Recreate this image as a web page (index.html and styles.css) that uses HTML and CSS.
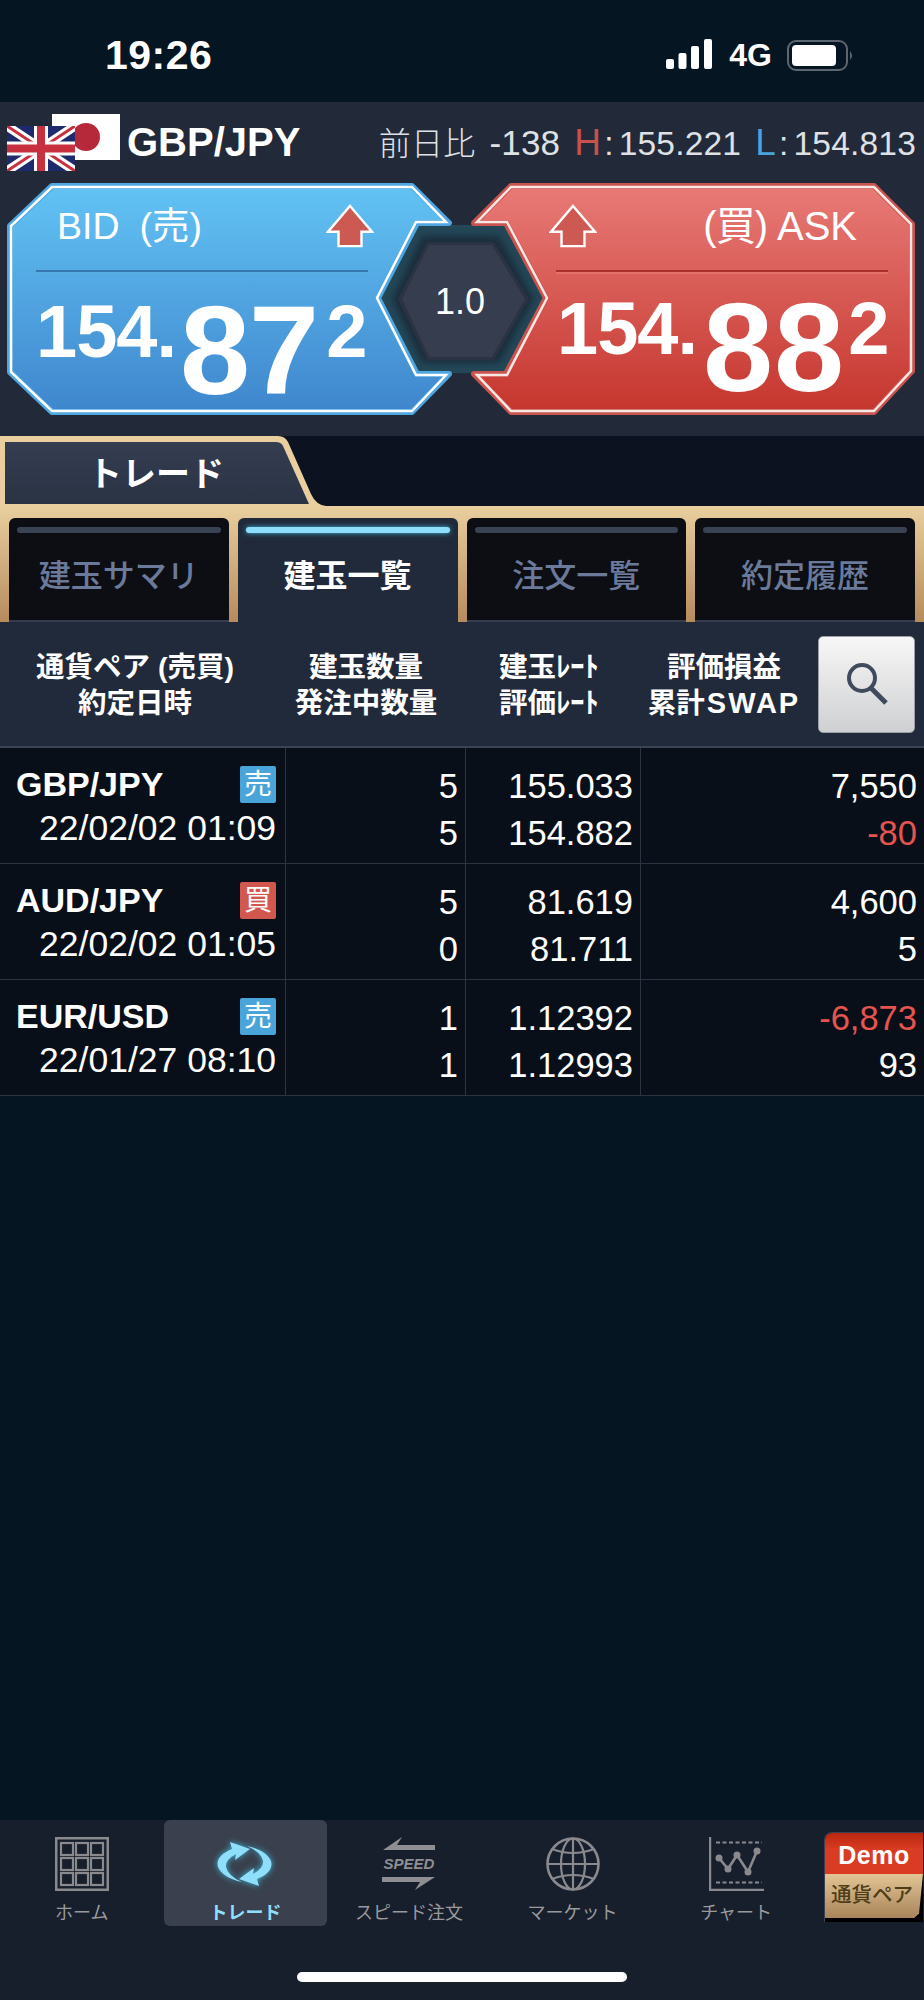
FILE: index.html
```html
<!DOCTYPE html>
<html lang="ja">
    <head>
        <meta charset="UTF-8" />
        <meta name="viewport" content="width=device-width, initial-scale=1.0" />
        <title>トレード</title>
        <link rel="stylesheet" href="styles.css">
    </head>
    <body>
        <div class="screen">
            <div class="status">
                <span class="time">19:26</span>
                <div class="status-right">
                    <svg class="signal" viewBox="0 0 46 30" width="46" height="30">
                        <rect x="0" y="20" width="8" height="10" rx="2" />
                        <rect x="12.5" y="14" width="8" height="16" rx="2" />
                        <rect x="25" y="7" width="8" height="23" rx="2" />
                        <rect x="38" y="0" width="8" height="30" rx="2" />
                    </svg>
                    <span class="net">4G</span>
                    <svg class="battery" viewBox="0 0 67 31" width="67" height="31">
                        <rect x="1" y="1" width="59" height="29" rx="8" fill="none" stroke="#5c6670" stroke-width="2" />
                        <rect x="5" y="5" width="44" height="21" rx="4" fill="#fff" />
                        <path d="M63 11 Q67 15.5 63 20 Z" fill="#5c6670" />
                    </svg>
                </div>
            </div>

            <div class="pair-bar">
                <div class="flags">
                    <svg class="flag-uk" viewBox="0 0 68 45" width="68" height="45">
                        <rect width="68" height="45" fill="#1d2a6b" />
                        <path d="M0 0 L68 45 M68 0 L0 45" stroke="#fff" stroke-width="9" />
                        <path d="M0 0 L68 45 M68 0 L0 45" stroke="#c8303f" stroke-width="3" />
                        <path d="M34 0 V45 M0 22.5 H68" stroke="#fff" stroke-width="14" />
                        <path d="M34 0 V45 M0 22.5 H68" stroke="#c8303f" stroke-width="8" />
                    </svg>
                    <svg class="flag-jp" viewBox="0 0 68 46" width="68" height="46">
                        <rect width="68" height="46" fill="#fff" />
                        <circle cx="34" cy="23" r="14" fill="#b5293b" />
                    </svg>
                </div>
                <span class="pair-name">GBP/JPY</span>
                <div class="pair-info">
                    <span class="info-label">前日比</span>
                    <span class="info-change">-138</span>
                    <span class="info-stat"><span class="stat-key high">H</span><span class="stat-colon">:</span>155.221</span>
                    <span class="info-stat"><span class="stat-key low">L</span><span class="stat-colon">:</span>154.813</span>
                </div>
            </div>

            <div class="quotes">
                <div class="quote quote-bid">
                    <svg class="quote-bg" viewBox="0 0 448 232" width="448" height="232">
                        <defs>
                            <linearGradient id="bidFill" x1="0" y1="0" x2="0" y2="1">
                                <stop offset="0" stop-color="#62c3f4" />
                                <stop offset="1" stop-color="#3f86cd" />
                            </linearGradient>
                        </defs>
                        <path d="M45 3 H405 L442 40 H410 L371 115 L410 191 H442 L405 229 H45 L3 189 V43 Z" fill="url(#bidFill)" stroke="#4fa6e0" stroke-width="6" stroke-linejoin="round" />
                        <path d="M45 4 H405 L439 39 H409 L370 115 L409 192 H439 L405 228 H45 L4 189 V43 Z" fill="none" stroke="#fff" stroke-width="2.5" />
                    </svg>
                    <div class="quote-head">
                        <span class="quote-label">BID<span class="label-gap"></span>(売)</span>
                        <svg class="arrow" viewBox="0 0 50 46" width="48" height="44">
                            <path d="M25 2 L48 29 H37 V44 H13 V29 H2 Z" fill="#cd5a52" stroke="#fff" stroke-width="2.5" />
                        </svg>
                    </div>
                    <div class="quote-rule"></div>
                    <div class="price">
                        <span class="price-small">154.</span><span class="price-big">87</span><span class="price-small">2</span>
                    </div>
                </div>

                <div class="quote quote-ask">
                    <svg class="quote-bg" viewBox="0 0 445 232" width="445" height="232">
                        <defs>
                            <linearGradient id="askFill" x1="0" y1="0" x2="0" y2="1">
                                <stop offset="0" stop-color="#e87a76" />
                                <stop offset="1" stop-color="#c5362e" />
                            </linearGradient>
                        </defs>
                        <path d="M41 3 H404 L442 41 V188 L404 229 H41 L4 191 H36 L76 115 L36 40 H4 Z" fill="url(#askFill)" stroke="#c9544f" stroke-width="6" stroke-linejoin="round" />
                        <path d="M41 4 H404 L441 41 V188 L404 228 H41 L7 192 H37 L77 115 L37 39 H7 Z" fill="none" stroke="#fbe6e4" stroke-width="2.5" />
                    </svg>
                    <div class="quote-head">
                        <svg class="arrow" viewBox="0 0 50 46" width="48" height="44">
                            <path d="M25 2 L48 29 H37 V44 H13 V29 H2 Z" fill="#cd5a52" stroke="#fff" stroke-width="2.5" />
                        </svg>
                        <span class="quote-label"><span class="paren-tight">(買)</span>ASK</span>
                    </div>
                    <div class="quote-rule"></div>
                    <div class="price">
                        <span class="price-small">154.</span><span class="price-big">88</span><span class="price-small">2</span>
                    </div>
                </div>

                <div class="spread">
                    <svg viewBox="0 0 170 148" width="170" height="148">
                        <polygon points="38,0 126,0 167,74 126,148 38,148 2,74" fill="#234757" />
                        <polygon class="spread-shade" points="44,11 121,11 156,74 121,138 44,138 14,74" fill="#1b2e3d" />
                        <polygon points="49,17 116,17 151,74 116,135 49,135 20,74" fill="#2b3242" />
                        <polygon points="51,20 114,20 147,74 114,132 51,132 24,74" fill="#363d4f" />
                    </svg>
                    <span class="spread-value">1.0</span>
                </div>
            </div>

            <div class="section-tab">
                <svg class="section-tab-bg" viewBox="0 0 326 70" width="326" height="70">
                    <defs>
                        <linearGradient id="tabFill" x1="0" y1="0" x2="0" y2="1">
                            <stop offset="0" stop-color="#353e51" />
                            <stop offset="1" stop-color="#2a3344" />
                        </linearGradient>
                    </defs>
                    <path d="M0 0 H278 Q285 0 288 6 L311 58 Q316 69 326 70 H0 Z" fill="#e9cf9f" />
                    <path d="M5 6 H276 Q281 6 283 10 L309 68 H5 Z" fill="url(#tabFill)" />
                </svg>
                <span class="section-tab-label">トレード</span>
            </div>

            <div class="subtabs">
                <div class="subtab"><span class="subtab-bar"></span>建玉サマリ</div>
                <div class="subtab subtab-on"><span class="subtab-bar"></span>建玉一覧</div>
                <div class="subtab"><span class="subtab-bar"></span>注文一覧</div>
                <div class="subtab"><span class="subtab-bar"></span>約定履歴</div>
            </div>

            <div class="table-head">
                <div class="th th-pair">通貨ペア (売買)<br />約定日時</div>
                <div class="th th-qty">建玉数量<br />発注中数量</div>
                <div class="th th-rate">建玉ﾚｰﾄ<br />評価ﾚｰﾄ</div>
                <div class="th th-pl">評価損益<br />累計<span class="swap">SWAP</span></div>
                <button class="search">
                    <svg viewBox="0 0 44 44" width="44" height="44">
                        <circle cx="17" cy="16" r="13" fill="none" stroke="#3f4a5e" stroke-width="4" />
                        <path d="M26 26 L41 41" stroke="#3f4a5e" stroke-width="5" />
                    </svg>
                </button>
            </div>

            <div class="row">
                <div class="cell cell-pair">
                    <div class="pair-line"><span class="pair">GBP/JPY</span><span class="badge badge-sell">売</span></div>
                    <div class="date">22/02/02 01:09</div>
                </div>
                <div class="cell"><div>5</div><div>5</div></div>
                <div class="cell"><div>155.033</div><div>154.882</div></div>
                <div class="cell"><div>7,550</div><div class="minus">-80</div></div>
            </div>
            <div class="row">
                <div class="cell cell-pair">
                    <div class="pair-line"><span class="pair">AUD/JPY</span><span class="badge badge-buy">買</span></div>
                    <div class="date">22/02/02 01:05</div>
                </div>
                <div class="cell"><div>5</div><div>0</div></div>
                <div class="cell"><div>81.619</div><div>81.711</div></div>
                <div class="cell"><div>4,600</div><div>5</div></div>
            </div>
            <div class="row">
                <div class="cell cell-pair">
                    <div class="pair-line"><span class="pair">EUR/USD</span><span class="badge badge-sell">売</span></div>
                    <div class="date">22/01/27 08:10</div>
                </div>
                <div class="cell"><div>1</div><div>1</div></div>
                <div class="cell"><div>1.12392</div><div>1.12993</div></div>
                <div class="cell"><div class="minus">-6,873</div><div>93</div></div>
            </div>

            <div class="spacer"></div>

            <div class="nav">
                <div class="nav-items">
                    <div class="nav-item">
                        <svg viewBox="0 0 54 54" width="54" height="54" fill="none" stroke="#8a8a8e" stroke-width="2.2">
                            <rect x="1.2" y="1.2" width="51.6" height="51.6" stroke-width="2.6" />
                            <rect x="6" y="6" width="12" height="12" />
                            <rect x="21" y="6" width="12" height="12" />
                            <rect x="36" y="6" width="12" height="12" />
                            <rect x="6" y="21" width="12" height="12" />
                            <rect x="21" y="21" width="12" height="12" />
                            <rect x="36" y="21" width="12" height="12" />
                            <rect x="6" y="36" width="12" height="12" />
                            <rect x="21" y="36" width="12" height="12" />
                            <rect x="36" y="36" width="12" height="12" />
                        </svg>
                        <span class="nav-label">ホーム</span>
                    </div>
                    <div class="nav-item nav-on">
                        <svg class="trade-icon" viewBox="-2 -2 60 48" width="60" height="54">
                            <path d="M13 0 L33 7 L18 18 L19 12 Q8 18 9 25 Q11 34 25 40 Q6 36 1 25 Q-2 14 15 7 Z" fill="#8fdffb" />
                            <path d="M13 0 L33 7 L18 18 L19 12 Q8 18 9 25 Q11 34 25 40 Q6 36 1 25 Q-2 14 15 7 Z" fill="#8fdffb" transform="rotate(180 27.5 22)" />
                        </svg>
                        <span class="nav-label">トレード</span>
                    </div>
                    <div class="nav-item">
                        <svg viewBox="0 0 54 54" width="54" height="54">
                            <path d="M1 13 L20 0 L15 8 H53 V13 Z" fill="#8f8f93" />
                            <text class="speed-text" x="27" y="32" text-anchor="middle">SPEED</text>
                            <path d="M0 40 H53 L33 53 L38 45 H0 Z" fill="#8f8f93" />
                        </svg>
                        <span class="nav-label">スピード注文</span>
                    </div>
                    <div class="nav-item">
                        <svg viewBox="0 0 54 54" width="54" height="54" fill="none" stroke="#8a8a8e" stroke-width="2.2">
                            <circle cx="27" cy="27" r="25.5" stroke-width="2.6" />
                            <ellipse cx="27" cy="27" rx="12" ry="25.5" />
                            <path d="M27 1.5 V52.5 M1.5 27 H52.5" />
                            <path d="M6 12 Q27 20 48 12 M6 42 Q27 34 48 42" />
                        </svg>
                        <span class="nav-label">マーケット</span>
                    </div>
                    <div class="nav-item">
                        <svg viewBox="0 0 55 54" width="55" height="54" fill="none" stroke="#8a8a8e" stroke-width="2.2">
                            <path d="M1 0 V53 H55" stroke-width="2.4" />
                            <path d="M7 5.5 H53 M7 45.5 H53" stroke-dasharray="4 2.5" />
                            <polyline points="10,21 19,32 28,18 39,35 48,14" stroke-width="2.6" />
                            <g fill="#8a8a8e" stroke="none">
                                <circle cx="10" cy="21" r="3.5" />
                                <circle cx="19" cy="32" r="3.5" />
                                <circle cx="28" cy="18" r="3.5" />
                                <circle cx="39" cy="35" r="3.5" />
                                <circle cx="48" cy="14" r="3.5" />
                            </g>
                        </svg>
                        <span class="nav-label">チャート</span>
                    </div>
                    <div class="demo">
                        <div class="demo-top">Demo</div>
                        <div class="demo-bottom">通貨ペア</div>
                    </div>
                </div>
                <div class="home-bar"></div>
            </div>
        </div>
    </body>
</html>
```

FILE: styles.css
```css
body {
    margin: 0;
    background: #051522;
    font-family: "Liberation Sans", "Noto Sans CJK JP", sans-serif;
    color: #fff;
}
.screen {
    width: 924px;
    height: 2000px;
    display: flex;
    flex-direction: column;
    overflow: hidden;
}

/* status bar */
.status {
    height: 102px;
    flex: none;
    display: flex;
    align-items: center;
    justify-content: space-between;
    padding: 8px 70px 0 105px;
    box-sizing: border-box;
}
.time {
    font-size: 41px;
    font-weight: bold;
    letter-spacing: 0.5px;
}
.status-right {
    display: flex;
    align-items: center;
}
.signal {
    fill: #fff;
    margin-top: -2px;
}
.net {
    font-size: 32px;
    font-weight: bold;
    margin: 0 15px 0 17px;
}

/* pair row */
.pair-bar {
    height: 81px;
    flex: none;
    background: #222939;
    display: flex;
    align-items: center;
    padding: 0 8px 0 7px;
    box-sizing: border-box;
}
.flags {
    display: flex;
    width: 120px;
    flex: none;
}
.flag-uk {
    margin-top: 12px;
    position: relative;
    z-index: 1;
}
.flag-jp {
    margin-left: -23px;
}
.pair-name {
    font-size: 40px;
    font-weight: bold;
}
.pair-info {
    margin-left: auto;
    display: flex;
    align-items: baseline;
    font-size: 33.5px;
    color: #dfe1e5;
    gap: 14px;
    letter-spacing: 0.2px;
}
.info-label {
    font-size: 32px;
    line-height: 36px;
    font-weight: 300;
}
.info-change {
    font-size: 35px;
}
.stat-key {
    font-size: 37px;
}
.stat-colon {
    margin: 0 5px 0 3px;
}
.high {
    color: #c9504c;
}
.low {
    color: #4aa3dd;
}

/* bid / ask */
.quotes {
    height: 253px;
    flex: none;
    background: #222939;
    display: flex;
    justify-content: space-between;
    padding: 0 9px 21px 7px;
    box-sizing: border-box;
    position: relative;
}
.quote {
    position: relative;
    z-index: 1;
    height: 232px;
    display: flex;
    flex-direction: column;
}
.quote-bid {
    width: 448px;
    padding-left: 29px;
    box-sizing: border-box;
}
.quote-ask {
    width: 445px;
    padding-left: 86px;
    box-sizing: border-box;
}
.quote-bg {
    position: absolute;
    left: 0;
    top: 0;
}
.quote-head,
.quote-rule,
.price {
    position: relative;
}
.quote-head {
    width: 332px;
    height: 46px;
    margin-top: 20px;
    display: flex;
    align-items: center;
    justify-content: space-between;
    box-sizing: border-box;
}
.quote-bid .quote-head {
    padding: 0 0 0 21px;
}
.quote-bid .arrow {
    margin-right: -6px;
}
.quote-ask .arrow {
    margin-left: -7px;
}
.quote-ask .quote-head {
    padding-right: 31px;
}
.quote-label {
    font-size: 37.5px;
    line-height: 42px;
    margin-top: -1px;
    white-space: nowrap;
}
.label-gap {
    display: inline-block;
    width: 20px;
}
.paren-tight {
    margin-right: 10px;
    letter-spacing: -1px;
}
.quote-ask .quote-label {
    font-size: 40px;
}
.quote-rule {
    width: 332px;
    height: 4px;
    margin-top: 21px;
    box-sizing: border-box;
}
.quote-bid .quote-rule {
    background: #58aee3;
    border-top: 2px solid #3577ae;
}
.quote-ask .quote-rule {
    background: #e5716b;
    border-top: 2px solid #a8322b;
}
.price {
    display: flex;
    align-items: flex-start;
    margin: 21px 0 0;
    font-weight: bold;
    white-space: nowrap;
}
.quote-ask .price {
    margin: 18px 0 0 1px;
}
.price-small {
    font-size: 74px;
    line-height: 1;
    letter-spacing: -1px;
}
.price-big {
    font-size: 126px;
    line-height: 1;
    letter-spacing: -1px;
    margin: -7px 8px 0 4px;
}
.quote-ask .price-big {
    letter-spacing: 1px;
    margin: -7px 3px 0 6px;
}
.spread {
    position: absolute;
    left: 378px;
    top: 42px;
    width: 170px;
    height: 148px;
    display: flex;
    align-items: center;
    justify-content: center;
}
.spread svg {
    position: absolute;
    left: 0;
    top: 0;
}
.spread-shade {
    filter: blur(3px);
}
.spread-value {
    position: relative;
    font-size: 36px;
    margin-top: 6px;
    margin-right: 6px;
}

/* tabs */
.section-tab {
    height: 70px;
    flex: none;
    background: #0c1220;
    position: relative;
    display: flex;
    align-items: center;
}
.section-tab-bg {
    position: absolute;
    left: 0;
    top: 0;
}
.section-tab-label {
    position: relative;
    width: 312px;
    text-align: center;
    font-size: 34px;
    font-weight: bold;
}
.subtabs {
    height: 116px;
    flex: none;
    display: flex;
    gap: 9px;
    padding: 12px 9px 0;
    box-sizing: border-box;
    background: linear-gradient(#e9cf9f, #b68b5d);
}
.subtab {
    flex: 1;
    background: #0c0e14;
    border-radius: 6px 6px 0 0;
    border-bottom: 2px solid #343c4d;
    color: #6b7a9b;
    font-size: 32px;
    font-weight: 500;
    text-align: center;
    line-height: 50px;
    padding-top: 33px;
    position: relative;
    box-sizing: border-box;
}
.subtab-bar {
    position: absolute;
    left: 8px;
    right: 8px;
    top: 9px;
    height: 6px;
    border-radius: 3px;
    background: #3a4354;
}
.subtab-on {
    background: #212a3a;
    border-bottom-color: #212a3a;
    color: #fff;
    font-weight: bold;
}
.subtab-on .subtab-bar {
    background: #8fdffb;
    box-shadow: 0 0 5px #3fb7e0;
}

/* table */
.table-head {
    height: 126px;
    flex: none;
    background: #212a3a;
    border-bottom: 2px solid #3a4254;
    box-sizing: border-box;
    display: flex;
    align-items: center;
    font-size: 28.5px;
    font-weight: bold;
    line-height: 36px;
    text-align: center;
}
.th {
    flex: none;
    margin-top: 2px;
}
.th-pair {
    width: 270px;
}
.th-qty {
    width: 192px;
}
.th-rate {
    width: 174px;
}
.th-pl {
    width: 176px;
}
.swap {
    font-size: 29px;
    letter-spacing: 2px;
    margin-left: 2px;
}
.search {
    width: 97px;
    height: 97px;
    margin-left: 6px;
    padding: 0;
    border: 1px solid #9b9ea4;
    border-radius: 5px;
    background: linear-gradient(#f7f7f7, #cfd0d2);
    display: flex;
    align-items: center;
    justify-content: center;
    box-sizing: border-box;
}
.row {
    height: 116px;
    flex: none;
    display: grid;
    grid-template-columns: 285px 180px 175px 284px;
    background: #080f18;
    border-bottom: 1px solid #2c3342;
    box-sizing: border-box;
    font-size: 34.5px;
}
.cell {
    border-left: 1px solid #2c3342;
    text-align: right;
    line-height: 47px;
    padding: 15px 7px 0 0;
    box-sizing: border-box;
}
.cell:last-child {
    padding-right: 7px;
}
.cell-pair {
    border-left: none;
    padding: 18px 9px 0 16px;
}
.pair-line {
    display: flex;
    justify-content: space-between;
    align-items: center;
    height: 37px;
}
.pair {
    font-weight: bold;
    font-size: 34px;
}
.badge {
    width: 36px;
    height: 37px;
    border-radius: 2px;
    font-size: 28px;
    line-height: 37px;
    text-align: center;
}
.badge-sell {
    background: #49a5d9;
}
.badge-buy {
    background: #d2574f;
}
.date {
    margin-top: 4px;
    line-height: 42px;
    font-size: 35.5px;
    white-space: nowrap;
}
.minus {
    color: #e5544e;
}
.spacer {
    flex: 1;
}

/* bottom nav */
.nav {
    height: 180px;
    flex: none;
    background: #171e2c;
    display: flex;
    flex-direction: column;
}
.nav-items {
    display: flex;
    height: 106px;
}
.nav-item {
    width: 163.6px;
    flex: none;
    display: flex;
    flex-direction: column;
    align-items: center;
    padding-top: 17px;
    box-sizing: border-box;
    border-radius: 6px;
}
.nav-label {
    font-size: 18px;
    line-height: 24px;
    margin-top: 10px;
    color: #9a9a9e;
    white-space: nowrap;
}
.nav-on {
    background: #3a404d;
}
.nav-on .nav-label {
    color: #8fdffb;
    font-weight: bold;
}
.trade-icon {
    filter: drop-shadow(0 0 3px #3fb7e0);
}
.speed-text {
    font-size: 15px;
    font-weight: bold;
    font-style: italic;
    fill: #8f8f93;
}
.demo {
    margin: 12px 0 0 6px;
    width: 99px;
    height: 90px;
    flex: none;
    background: #000;
    border-radius: 8px 0 0 0;
    border-left: 1px solid #3a4356;
    border-top: 1px solid #3a4356;
    box-sizing: border-box;
}
.demo-top {
    height: 41px;
    background: linear-gradient(#b8280f, #d93c22 40%);
    border-radius: 7px 0 0 0;
    font-size: 25px;
    font-weight: bold;
    line-height: 44px;
    text-align: center;
    letter-spacing: 0.5px;
}
.demo-bottom {
    height: 44px;
    background: linear-gradient(#e3c595, #a8845a);
    clip-path: polygon(0 0, 100% 0, 96% 90%, 91% 100%, 0 100%);
    color: #4f3d18;
    font-size: 20.5px;
    font-weight: 500;
    line-height: 42px;
    padding-left: 6px;
    white-space: nowrap;
}
.home-bar {
    width: 330px;
    height: 10px;
    border-radius: 5px;
    background: #fff;
    margin: 46px auto 0 297px;
}
```
